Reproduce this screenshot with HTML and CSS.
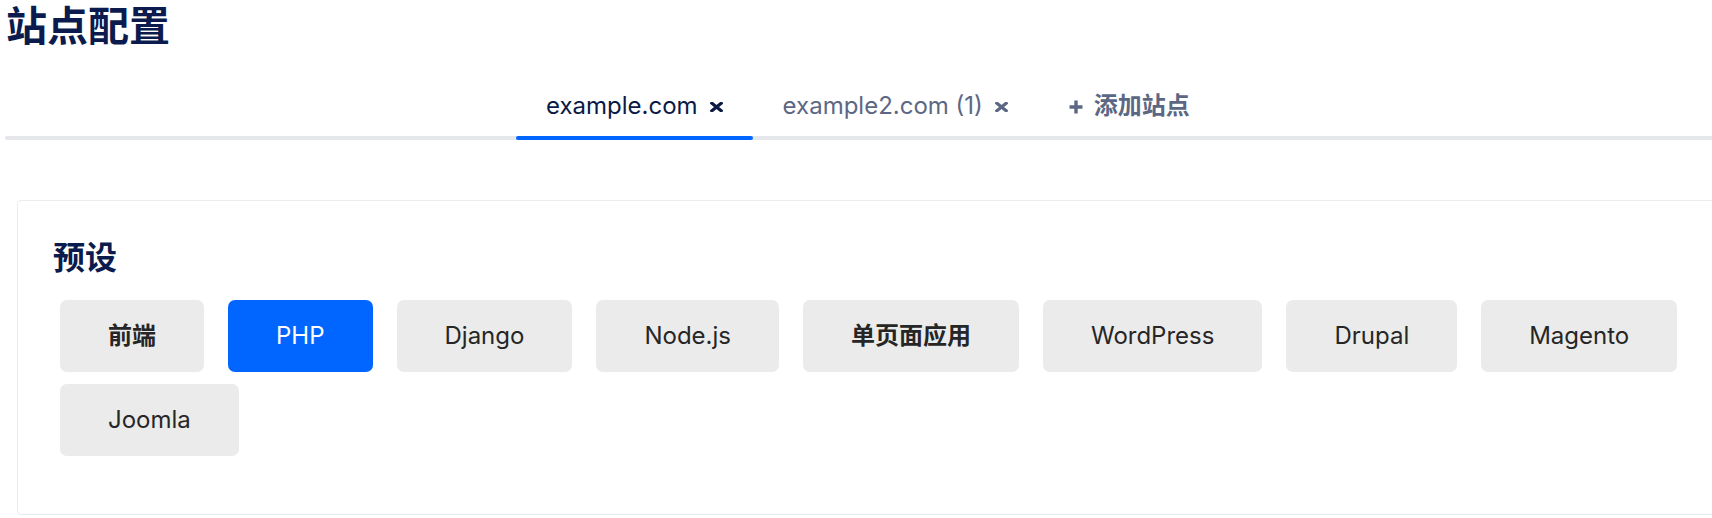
FILE: index.html
```html
<!DOCTYPE html>
<html lang="zh-CN">
<head>
<meta charset="utf-8">
<title>站点配置</title>
<link rel="stylesheet" href="styles.css">
</head>
<body>
<div class="page">
  <h1 class="title">站点配置</h1>
  <nav class="tabs">
    <div class="tab active">example.com<svg class="close" viewBox="0 0 13 10" width="13" height="10"><path d="M1.8 1.2L11.2 8.8M11.2 1.2L1.8 8.8"/></svg></div>
    <div class="tab">example2.com (1)<svg class="close" viewBox="0 0 13 10" width="13" height="10"><path d="M1.8 1.2L11.2 8.8M11.2 1.2L1.8 8.8"/></svg></div>
    <div class="tab add"><svg class="plus" viewBox="0 0 14 14" width="14" height="14"><path d="M7 0.5V13.5M0.5 7H13.5"/></svg>添加站点</div>
  </nav>
  <section class="card">
    <h2 class="card-title">预设</h2>
    <div class="presets">
      <button class="preset cjk">前端</button>
      <button class="preset selected">PHP</button>
      <button class="preset">Django</button>
      <button class="preset">Node.js</button>
      <button class="preset cjk">单页面应用</button>
      <button class="preset">WordPress</button>
      <button class="preset">Drupal</button>
      <button class="preset">Magento</button>
      <button class="preset">Joomla</button>
    </div>
  </section>
</div>
</body>
</html>
```
FILE: styles.css
```css
html, body {
  margin: 0;
  padding: 0;
  background: #ffffff;
  overflow: hidden;
}

body {
  font-family: "Inter", "Noto Sans CJK SC", sans-serif;
  color: #262626;
}

.page {
  width: 1800px;
  padding-left: 5px;
}

.title {
  margin: 0;
  padding-left: 1px;
  padding-top: 2px;
  font-size: 41px;
  line-height: 49px;
  font-weight: 700;
  color: #0c1b4d;
}

.tabs {
  position: relative;
  display: flex;
  margin-top: 35px;
  padding-left: 511px;
}

.tabs::before {
  content: "";
  position: absolute;
  left: 0;
  right: 0;
  bottom: 0;
  height: 4px;
  border-radius: 2px;
  background: #e5e7eb;
}

.tab {
  position: relative;
  display: flex;
  align-items: center;
  padding: 2px 30px 16px;
  font-size: 24px;
  line-height: 36px;
  color: #5c6784;
}

.tab.active {
  color: #0b1a45;
}

.tab.active::after {
  content: "";
  position: absolute;
  left: 0;
  right: 0;
  bottom: 0;
  height: 4px;
  border-radius: 2px;
  background: #0066ff;
}

.close {
  margin-left: 12px;
  margin-top: 2px;
  fill: none;
  stroke: currentColor;
  stroke-width: 3.2;
  stroke-linecap: square;
}

.tab.add {
  font-weight: 700;
}

.plus {
  margin-left: 1px;
  margin-right: 11px;
  margin-top: 1px;
  fill: none;
  stroke: currentColor;
  stroke-width: 3.4;
}

.card {
  margin-top: 60px;
  margin-left: 12px;
  border: 1px solid #ececec;
  border-radius: 4px;
  padding: 37px 0 58px 35px;
}

.card-title {
  margin: 0;
  font-size: 32px;
  line-height: 40px;
  font-weight: 700;
  color: #0c1b4d;
}

.presets {
  display: flex;
  flex-wrap: wrap;
  gap: 12px 24px;
  margin-top: 22px;
  margin-left: 7px;
  width: 1660px;
}

.preset {
  height: 72px;
  padding: 0 48px;
  border: none;
  border-radius: 7px;
  background: #ebebeb;
  font-family: "Inter", "Noto Sans CJK SC", sans-serif;
  font-size: 24px;
  line-height: 36px;
  font-weight: 400;
  color: #262626;
}

.preset.cjk {
  font-weight: 700;
}

.preset.selected {
  background: #0066ff;
  color: #ffffff;
}
```
